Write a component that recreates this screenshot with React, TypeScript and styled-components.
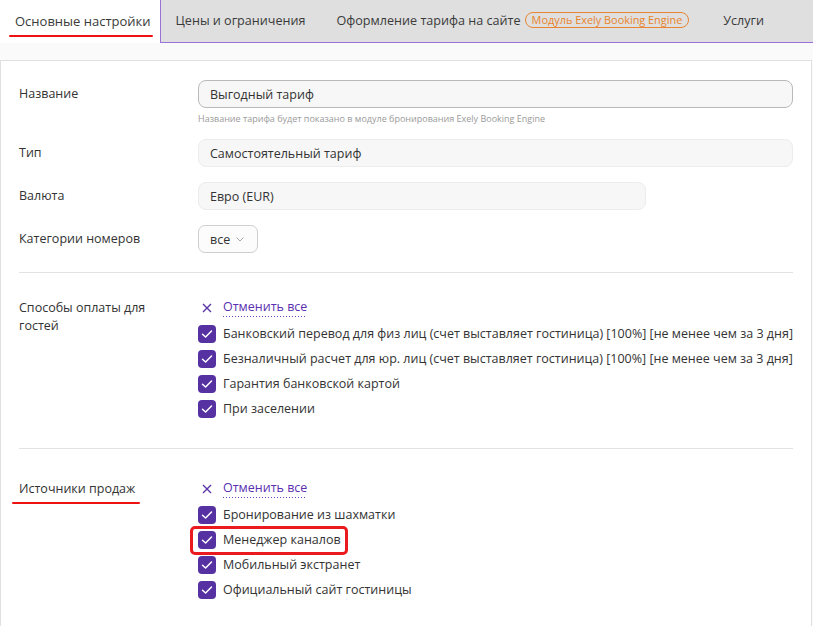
import React from "react";
import styled, { createGlobalStyle } from "styled-components";

const GlobalStyle = createGlobalStyle`
  html, body { margin: 0; padding: 0; background: #fafafa; }
  body { font-family: "Open Sans", "Liberation Sans", sans-serif; color: #333; }
  * { box-sizing: border-box; }
`;

const Page = styled.div`
  width: 813px;
  height: 626px;
  overflow: hidden;
  background: #fafafa;
`;

const TabBar = styled.div`
  display: flex;
  align-items: stretch;
  height: 43px;
  background: #dfdfdf;
  border-bottom: 1px solid #9b72d8;
`;

const Tab = styled.div<{ $active?: boolean; $extra?: number }>`
  position: relative;
  display: flex;
  align-items: center;
  padding: 0 16px 2px 15px;
  margin-right: ${(p) => p.$extra ?? 0}px;
  font-size: 12.6px;
  color: #3a3a3a;
  white-space: nowrap;
  ${(p) =>
    p.$active &&
    `
    font-size: 13px;
    background: #fff;
    border-right: 1px solid #9b72d8;
    margin-bottom: -1px;
    padding-right: 9px;
  `}
`;

const RedUnderlined = styled.span<{ $left: number; $right: number; $bottom: number }>`
  position: relative;
  &::after {
    content: "";
    position: absolute;
    left: ${(p) => p.$left}px;
    right: ${(p) => p.$right}px;
    bottom: ${(p) => p.$bottom}px;
    height: 2px;
    border-radius: 1px;
    background: #ee1111;
  }
`;

const Badge = styled.span`
  display: inline-block;
  margin-left: 4px;
  padding: 0 6px;
  border: 1px solid #e88432;
  border-radius: 8px;
  color: #e8832a;
  font-size: 10.9px;
  line-height: 14px;
`;

const Panel = styled.div`
  margin-top: 17px;
  margin-right: 1px;
  height: 600px;
  background: #fff;
  border: 1px solid #e0e0e0;
  padding: 19px 18px 0 18px;
`;

const Section = styled.div<{ $top: number; $bottom: number; $divider?: boolean }>`
  padding-top: ${(p) => p.$top}px;
  padding-bottom: ${(p) => p.$bottom}px;
  border-bottom: ${(p) => (p.$divider ? "1px solid #e2e2e2" : "none")};
`;

const FormRow = styled.div<{ $gap?: number; $top?: number }>`
  display: grid;
  grid-template-columns: 179px 1fr;
  margin-top: ${(p) => p.$top ?? 0}px;
  margin-bottom: ${(p) => p.$gap ?? 0}px;
`;

const Label = styled.div<{ $lh?: number; $pt?: number }>`
  font-size: 12.5px;
  line-height: ${(p) => p.$lh ?? 28}px;
  padding-top: ${(p) => p.$pt ?? 0}px;
  color: #333;
  padding-right: 20px;
`;

const Field = styled.div<{ $width?: number; $strong?: boolean }>`
  height: 28px;
  width: ${(p) => (p.$width ? `${p.$width}px` : "100%")};
  display: flex;
  align-items: center;
  padding: 0 11px;
  font-size: 12.5px;
  color: #333;
  background: #f7f7f7;
  border: 1px solid ${(p) => (p.$strong ? "#b9b9b9" : "#ececec")};
  border-radius: 8px;
`;

const Hint = styled.div`
  font-size: 9px;
  line-height: 12px;
  margin-top: 5px;
  color: #9a9a9a;
`;

const SelectBox = styled.div`
  display: inline-flex;
  align-items: center;
  gap: 6px;
  height: 28px;
  width: 60px;
  padding: 0 11px;
  font-size: 12.5px;
  color: #333;
  background: #fcfcfc;
  border: 1px solid #cfcfcf;
  border-radius: 7px;
`;

const Options = styled.div`
  display: flex;
  flex-direction: column;
`;

const OptionRow = styled.div<{ $h?: number }>`
  display: flex;
  align-items: center;
  height: ${(p) => p.$h ?? 25}px;
  gap: 7px;
  font-size: 12.5px;
  color: #333;
  white-space: nowrap;
`;

const Highlight = styled.span`
  position: relative;
  display: inline-flex;
  align-items: center;
  gap: 7px;
  &::after {
    content: "";
    position: absolute;
    left: -8px;
    right: -7px;
    top: -5px;
    bottom: -6px;
    border: 3px solid #ea1a1e;
    border-radius: 5px;
  }
`;

const Box = styled.span`
  width: 18px;
  height: 18px;
  border-radius: 4px;
  background: #5531a2;
  display: inline-flex;
  align-items: center;
  justify-content: center;
  flex: none;
`;

const CancelIcon = styled.span`
  width: 18px;
  display: inline-flex;
  justify-content: center;
  color: #5a35a8;
`;

const CancelLink = styled.span`
  color: #5a2fb0;
  font-size: 12.5px;
  line-height: 16px;
  padding-bottom: 2px;
  background-image: linear-gradient(to right, #6b44c2 1px, transparent 1px);
  background-size: 3px 1px;
  background-repeat: repeat-x;
  background-position: 0 100%;
`;

const Check = () => (
  <Box>
    <svg width="12" height="10" viewBox="0 0 12 10">
      <path d="M1.5 5.2 L4.6 8 L10.5 2" fill="none" stroke="#fff" strokeWidth="1.5" strokeLinecap="round" strokeLinejoin="round" />
    </svg>
  </Box>
);

const Cancel = () => (
  <OptionRow $h={26}>
    <CancelIcon>
      <svg width="10" height="10" viewBox="0 0 10 10">
        <path d="M1 1 L9 9 M9 1 L1 9" stroke="#5a35a8" strokeWidth="1.4" />
      </svg>
    </CancelIcon>
    <CancelLink>Отменить все</CancelLink>
  </OptionRow>
);

const payments = [
  "Банковский перевод для физ лиц (счет выставляет гостиница) [100%] [не менее чем за 3 дня]",
  "Безналичный расчет для юр. лиц (счет выставляет гостиница) [100%] [не менее чем за 3 дня]",
  "Гарантия банковской картой",
  "При заселении",
];

const sources = ["Бронирование из шахматки", "Менеджер каналов", "Мобильный экстранет", "Официальный сайт гостиницы"];

export default function App() {
  return (
    <Page>
      <GlobalStyle />
      <TabBar>
        <Tab $active>
          <RedUnderlined $left={-6} $right={-2} $bottom={-7}>Основные настройки</RedUnderlined>
        </Tab>
        <Tab>Цены и ограничения</Tab>
        <Tab $extra={3}>
          Оформление тарифа на сайте
          <Badge>Модуль Exely Booking Engine</Badge>
        </Tab>
        <Tab>Услуги</Tab>
      </TabBar>
      <Panel>
        <Section $top={0} $bottom={19} $divider>
          <FormRow>
            <Label>Название</Label>
            <div>
              <Field $strong>Выгодный тариф</Field>
              <Hint>Название тарифа будет показано в модуле бронирования Exely Booking Engine</Hint>
            </div>
          </FormRow>
          <FormRow $top={14} $gap={15}>
            <Label>Тип</Label>
            <Field>Самостоятельный тариф</Field>
          </FormRow>
          <FormRow $gap={15}>
            <Label>Валюта</Label>
            <Field $width={448}>Евро (EUR)</Field>
          </FormRow>
          <FormRow>
            <Label>Категории номеров</Label>
            <div>
              <SelectBox>
                все
                <svg width="8" height="5" viewBox="0 0 8 5">
                  <path d="M0.5 0.5 L4 4 L7.5 0.5" fill="none" stroke="#aaa" strokeWidth="1" />
                </svg>
              </SelectBox>
            </div>
          </FormRow>
        </Section>
        <Section $top={22} $bottom={27} $divider>
          <FormRow>
            <Label $lh={18} $pt={4}>Способы оплаты для гостей</Label>
            <Options>
              <Cancel />
              {payments.map((t) => (
                <OptionRow key={t}>
                  <Check />
                  {t}
                </OptionRow>
              ))}
            </Options>
          </FormRow>
        </Section>
        <Section $top={27} $bottom={0}>
          <FormRow>
            <Label $lh={25}>
              <RedUnderlined $left={-7} $right={-5} $bottom={-7}>Источники продаж</RedUnderlined>
            </Label>
            <Options>
              <Cancel />
              {sources.map((t) =>
                t === "Менеджер каналов" ? (
                  <OptionRow key={t}>
                    <Highlight>
                      <Check />
                      {t}
                    </Highlight>
                  </OptionRow>
                ) : (
                  <OptionRow key={t}>
                    <Check />
                    {t}
                  </OptionRow>
                )
              )}
            </Options>
          </FormRow>
        </Section>
      </Panel>
    </Page>
  );
}
